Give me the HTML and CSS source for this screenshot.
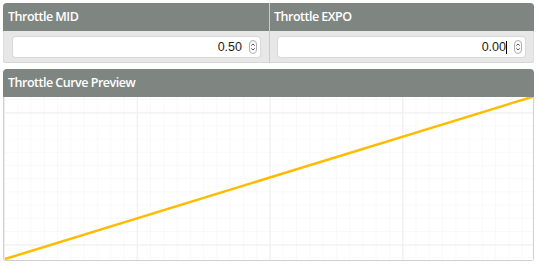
FILE: index.html
```html
<!DOCTYPE html>
<html>
<head>
<meta charset="utf-8">
<link rel="stylesheet" href="styles.css">
</head>
<body>
<div class="page">
  <section class="panel params">
    <div class="col">
      <div class="head">Throttle MID</div>
      <div class="body">
        <div class="numbox"><span class="val">0.50</span><span class="spin"><svg width="8" height="14" viewBox="0 0 8 14"><rect x="0.5" y="0.5" width="7" height="13" rx="3.5" fill="#fafafa" stroke="#b0b0b0"/><path d="M2.3 5.6 L4 4 L5.7 5.6 M2.3 8.4 L4 10 L5.7 8.4" fill="none" stroke="#444" stroke-width="0.9"/></svg></span></div>
      </div>
    </div>
    <div class="col">
      <div class="head">Throttle EXPO</div>
      <div class="body">
        <div class="numbox"><span class="val">0.00</span><span class="caret"></span><span class="spin"><svg width="8" height="14" viewBox="0 0 8 14"><rect x="0.5" y="0.5" width="7" height="13" rx="3.5" fill="#fafafa" stroke="#b0b0b0"/><path d="M2.3 5.6 L4 4 L5.7 5.6 M2.3 8.4 L4 10 L5.7 8.4" fill="none" stroke="#444" stroke-width="0.9"/></svg></span></div>
      </div>
    </div>
  </section>
  <section class="panel preview">
    <div class="head">Throttle Curve Preview</div>
    <div class="chart">
      <svg width="529" height="163" viewBox="0 0 529 163">
        <defs>
          <pattern id="minor" patternUnits="userSpaceOnUse" width="13.275" height="13.2" x="0" y="2">
            <path d="M0 0 V13.2 M0 0 H13.275" fill="none" stroke="#f4f4f4" stroke-width="1"/>
          </pattern>
          <pattern id="major" patternUnits="userSpaceOnUse" width="132.75" height="132" x="0" y="15.5">
            <path d="M0 0 V132 M0 0 H132.75" fill="none" stroke="#eeeeee" stroke-width="2"/>
          </pattern>
        </defs>
        <rect width="529" height="163" fill="#fff"/>
        <rect width="529" height="163" fill="url(#minor)"/>
        <rect width="529" height="163" fill="url(#major)"/>
        <line x1="1" y1="162" x2="531" y2="-1" stroke="#ffbb00" stroke-width="2.5"/>
      </svg>
    </div>
  </section>
</div>
</body>
</html>
```
FILE: styles.css
```css
html, body {
  margin: 0;
  padding: 0;
  background: #fff;
}
.page {
  padding: 3px 8px 0 3px;
  display: flex;
  flex-direction: column;
  gap: 6px;
  font-family: "Open Sans", "Liberation Sans", sans-serif;
}
.panel {
  width: 531px;
  border-radius: 4px 4px 3px 3px;
  overflow: hidden;
}
.head {
  height: 28px;
  line-height: 28px;
  background: #7f8681;
  color: #fff;
  font-weight: 600;
  font-size: 12.5px;
  padding-left: 5px;
  letter-spacing: -0.5px;
}
.params {
  display: grid;
  grid-template-columns: 266px 265px;
  background: #e7e7e7;
  box-shadow: inset 0 -1px 0 #d6d6d6, inset 1px 0 0 #dedede, inset -1px 0 0 #dedede;
}
.params .col + .col {
  border-left: 1px solid #c9cbc9;
}
.params .col + .col .head {
  padding-left: 4px;
}
.params .body {
  height: 32px;
  padding: 6px 9px 0 10px;
  box-sizing: border-box;
}
.params .col + .col .body {
  padding-left: 8px;
}
.numbox {
  height: 20px;
  background: #fff;
  border-radius: 3px;
  box-shadow: 0 0 0 1px #d9d9d9;
  display: flex;
  align-items: center;
  justify-content: flex-end;
  padding-right: 3px;
  font-family: "Liberation Sans", Arial, sans-serif;
  font-size: 12.5px;
  color: #222;
}
.numbox .val {
  line-height: 20px;
}
.numbox .caret {
  width: 1px;
  height: 13px;
  background: #000;
}
.numbox .spin {
  display: flex;
  margin-left: 7px;
}
.preview .chart {
  height: 164px;
  box-sizing: border-box;
  border: 1px solid #cfcfcf;
  border-top: none;
  background: #fff;
}
.preview .chart svg {
  display: block;
}
```
